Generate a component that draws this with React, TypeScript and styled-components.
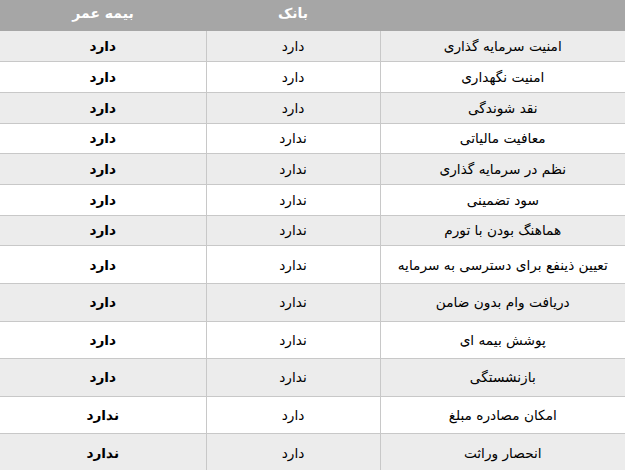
import { createGlobalStyle, styled } from "styled-components";

const GlobalStyle = createGlobalStyle`
  html, body {
    margin: 0;
    padding: 0;
    background: #ffffff;
  }
  body {
    font-family: "DejaVu Sans", "Noto Sans", sans-serif;
  }
`;

const Table = styled.table`
  direction: rtl;
  width: 625px;
  border-collapse: collapse;
  table-layout: fixed;
  font-size: 13.7px;
  color: #000;
`;

const HeadCell = styled.th`
  background-color: #a6a6a6;
  color: #ffffff;
  font-size: 14px;
  font-weight: 700;
  height: 31px;
  box-sizing: border-box;
  padding: 0;
  line-height: 26px;
  text-align: center;
  vertical-align: top;
`;

const Row = styled.tr<{ $striped: boolean; $tall: boolean }>`
  background-color: ${(p) => (p.$striped ? "#ececec" : "#ffffff")};
  height: ${(p) => (p.$tall ? "37.6px" : "30.7px")};
  border-bottom: 1px solid #c8c8c8;
`;

const Cell = styled.td<{ $bold?: boolean }>`
  padding: 0 6px;
  text-align: center;
  vertical-align: middle;
  font-weight: ${(p) => (p.$bold ? 700 : 400)};
  border-left: 1px solid #c8c8c8;
  &:last-child {
    border-left: none;
  }
`;

const rows: [string, string, string][] = [
  ["امنیت سرمایه گذاری", "دارد", "دارد"],
  ["امنیت نگهداری", "دارد", "دارد"],
  ["نقد شوندگی", "دارد", "دارد"],
  ["معافیت مالیاتی", "ندارد", "دارد"],
  ["نظم در سرمایه گذاری", "ندارد", "دارد"],
  ["سود تضمینی", "ندارد", "دارد"],
  ["هماهنگ بودن با تورم", "ندارد", "دارد"],
  ["تعیین ذینفع برای دسترسی به سرمایه", "ندارد", "دارد"],
  ["دریافت وام بدون ضامن", "ندارد", "دارد"],
  ["پوشش بیمه ای", "ندارد", "دارد"],
  ["بازنشستگی", "ندارد", "دارد"],
  ["امکان مصادره مبلغ", "دارد", "ندارد"],
  ["انحصار وراثت", "دارد", "ندارد"],
];

export default function App() {
  return (
    <>
      <GlobalStyle />
      <Table>
        <colgroup>
          <col style={{ width: 245 }} />
          <col style={{ width: 174 }} />
          <col style={{ width: 206 }} />
        </colgroup>
        <thead>
          <tr>
            <HeadCell />
            <HeadCell>بانک</HeadCell>
            <HeadCell>بیمه عمر</HeadCell>
          </tr>
        </thead>
        <tbody>
          {rows.map(([feature, bank, insurance], i) => (
            <Row key={feature} $striped={i % 2 === 0} $tall={i >= 7}>
              <Cell>{feature}</Cell>
              <Cell>{bank}</Cell>
              <Cell $bold>{insurance}</Cell>
            </Row>
          ))}
        </tbody>
      </Table>
    </>
  );
}
